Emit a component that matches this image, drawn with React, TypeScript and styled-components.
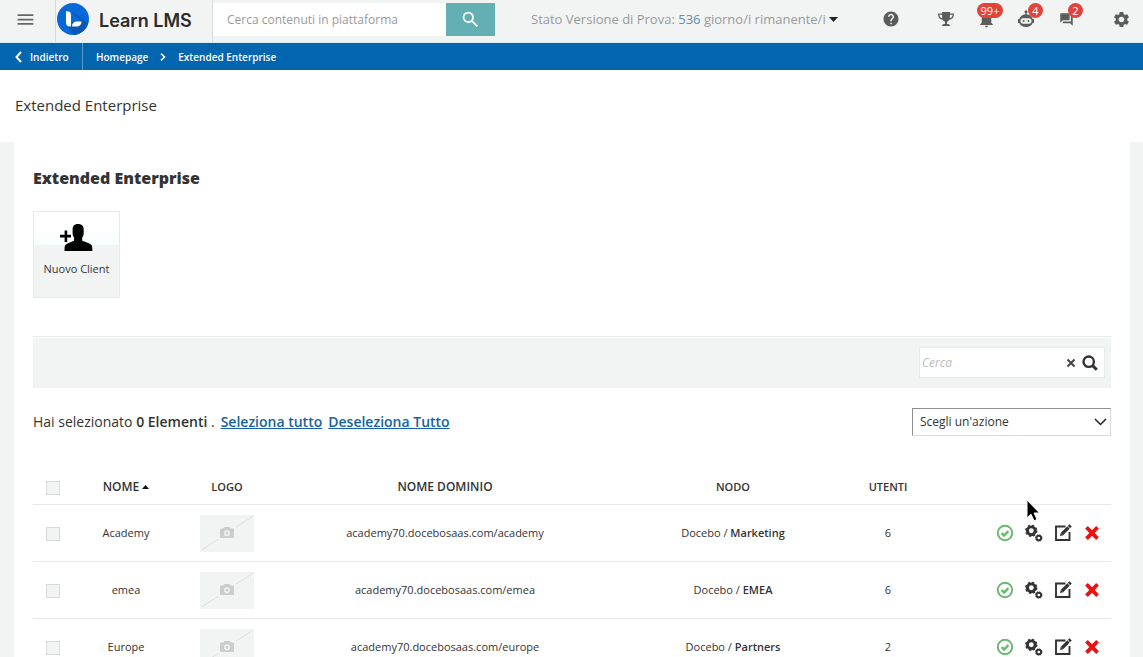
import React from "react";
import styled, { createGlobalStyle } from "styled-components";
import { MdMenu, MdSearch, MdHelp, MdSettings, MdForum, MdNotifications } from "react-icons/md";

const GlobalStyle = createGlobalStyle`
  *, *::before, *::after { box-sizing: border-box; }
  html { scrollbar-width: none; }
  body {
    margin: 0;
    background: #fff;
    color: #333;
    font-family: "Open Sans", "Noto Sans", sans-serif;
    font-size: 12px;
    line-height: 16px;
  }
  button, input, select { font: inherit; color: inherit; margin: 0; }
  button { border: 0; padding: 0; background: none; cursor: pointer; }
  a { color: inherit; text-decoration: none; }
`;

const Page = styled.div`
  position: relative;
`;

const TopBar = styled.header`
  display: flex;
  align-items: stretch;
  height: 43px;
  background: #f2f4f4;
  border-bottom: 1px solid #d5eef4;
`;

const MenuButton = styled.button`
  width: 55px;
  padding: 0 4px 4px 0;
  display: flex;
  align-items: center;
  justify-content: center;
  color: #666;
`;

const Brand = styled.a`
  display: flex;
  align-items: center;
  gap: 10px;
  width: 158px;
  padding: 0 0 4px 1px;
  border-left: 1px solid #d8dada;
  border-right: 1px solid #d8dada;
  color: #2b2b2b;
  font-family: Inter, "Liberation Sans", sans-serif;
  font-size: 18px;
  line-height: 24px;
  font-weight: 600;
  white-space: nowrap;
`;

const BrandName = styled.span`
  padding-top: 4px;
`;

const GlobalSearch = styled.form`
  display: flex;
  width: 282px;
  padding: 3px 0 6px;
`;

const GlobalSearchInput = styled.input`
  flex: 1;
  min-width: 0;
  padding: 0 14px;
  border: 0;
  background: #fff;
  &::placeholder { color: #999; opacity: 1; }
`;

const GlobalSearchButton = styled.button`
  width: 49px;
  display: flex;
  align-items: center;
  justify-content: center;
  border-radius: 0 1px 1px 0;
  background: #62b0b3;
  color: #fff;
`;

const TrialStatus = styled.button`
  display: flex;
  align-items: center;
  gap: 3px;
  margin-left: 36px;
  padding-bottom: 4px;
  color: #999;
  font-size: 13px;
  white-space: nowrap;
  span { color: #5f8db8; }
`;

const Tools = styled.nav`
  display: flex;
  margin-left: auto;
  padding: 0 2px 4px 0;
`;

const ToolButton = styled.button<{ $before?: boolean; $after?: boolean }>`
  position: relative;
  width: 40px;
  margin-left: ${(p) => (p.$before ? 15 : 0)}px;
  margin-right: ${(p) => (p.$after ? 15 : 0)}px;
  display: flex;
  align-items: center;
  justify-content: center;
  color: #5c5c5c;
`;

const Badge = styled.span<{ $wide?: boolean }>`
  position: absolute;
  top: 3px;
  left: ${(p) => (p.$wide ? 11 : 22)}px;
  min-width: ${(p) => (p.$wide ? 26 : 15)}px;
  height: 15px;
  border-radius: 8px;
  background: #e0443a;
  color: #fff;
  font-size: 11px;
  line-height: 15px;
  text-align: center;
`;

const Breadcrumbs = styled.nav`
  display: flex;
  align-items: center;
  height: 27px;
  background: #0265ae;
  color: #fff;
  font-size: 10px;
  font-weight: 600;
`;

const BackLink = styled.a`
  display: flex;
  align-items: center;
  gap: 8px;
  align-self: stretch;
  width: 83px;
  padding-left: 15px;
  border-right: 1px solid #5a9bcc;
`;

const Trail = styled.div`
  display: flex;
  align-items: center;
  gap: 12px;
  padding-left: 13px;
`;

const PageTitle = styled.h1`
  margin: 0;
  padding: 23px 15px 25px;
  font-size: 15px;
  line-height: 24px;
  font-weight: 400;
`;

const Gutter = styled.main`
  padding: 0 13px 0 14px;
  background: #f2f4f4;
`;

const Panel = styled.section`
  padding: 24px 19px 40px;
  background: #fff;
`;

const SectionTitle = styled.h2`
  margin: 0 0 21px;
  font-size: 16px;
  line-height: 24px;
  font-weight: 800;
`;

const ActionTile = styled.button`
  display: flex;
  flex-direction: column;
  align-items: center;
  gap: 8px;
  width: 87px;
  height: 87px;
  padding-top: 12px;
  border: 1px solid #e8eaea;
  background: linear-gradient(#fff 16px, #f6fdfd 33px, #f2f4f4 33px);
  font-size: 11px;
`;

const FilterBar = styled.div`
  display: flex;
  justify-content: flex-end;
  margin-top: 38px;
  padding: 10px 6px;
  background: #f2f4f4;
  border-top: 1px solid #e8eaea;
  box-shadow: inset 0 1px #fff;
`;

const FilterForm = styled.form`
  display: flex;
  align-items: center;
  gap: 6px;
  width: 186px;
  height: 31px;
  padding: 0 6px 0 2px;
  border: 1px solid #e8eaea;
  background: #fff;
`;

const FilterInput = styled.input`
  flex: 1;
  min-width: 0;
  padding: 0;
  border: 0;
  background: none;
  &::placeholder { color: #bbb; opacity: 1; font-style: italic; }
`;

const IconButton = styled.button`
  display: flex;
`;

const SelectionBar = styled.div`
  display: flex;
  justify-content: space-between;
  align-items: center;
  margin-top: 20px;
`;

const SelectionText = styled.p`
  margin: 0;
  display: flex;
  gap: 6px;
  font-size: 14px;
  line-height: 20px;
  b { font-weight: 600; }
`;

const SelectionLink = styled.a`
  color: #1564a0;
  font-weight: 600;
  text-decoration: underline;
`;

const SelectWrap = styled.div`
  display: grid;
  align-items: center;
  width: 199px;
  > * { grid-area: 1 / 1; }
  > svg { justify-self: end; margin-right: 4px; pointer-events: none; }
`;

const ActionSelect = styled.select`
  appearance: none;
  width: 100%;
  height: 28px;
  padding: 0 24px 0 7px;
  border: 1px solid;
  border-color: #8f8f8f #d8d8d8 #d8d8d8 #8f8f8f;
  border-radius: 0;
  background: #fff;
`;

const ClientTable = styled.table`
  width: 100%;
  margin-top: 33px;
  table-layout: fixed;
  border-collapse: separate;
  border-spacing: 0;
  text-align: center;
`;

const HeadCell = styled.th`
  height: 36px;
  padding: 0;
  border-bottom: 1px solid #e8e8e8;
  font-size: 11px;
  font-weight: 600;
  text-transform: uppercase;
`;

const SortButton = styled.button`
  display: inline-flex;
  align-items: center;
  gap: 3px;
  font-size: 12px;
  font-weight: 600;
  text-transform: uppercase;
`;

const Cell = styled.td`
  height: 57px;
  padding: 0;
  border-bottom: 1px solid #e8e8e8;
  font-size: 11px;
  b { font-weight: 600; }
`;

const Tick = styled.input.attrs({ type: "checkbox" })`
  appearance: none;
  display: block;
  width: 14px;
  height: 14px;
  margin: 2px auto 0;
  border: 1px solid #d8dada;
  background: #f2f4f4;
  &:checked { background: #0265ae; }
`;

const Thumb = styled.svg`
  display: block;
  margin: 0 auto;
`;

const RowActions = styled.div`
  display: flex;
  justify-content: flex-end;
  align-items: center;
  gap: 11px;
  padding-right: 10px;
`;

const Pointer = styled.svg`
  position: absolute;
  left: 90%;
  top: 499px;
  margin-left: -3px;
  pointer-events: none;
`;

const LogoMark = () => (
  <svg width="32" height="32" viewBox="0 0 32 32" aria-hidden="true">
    <circle cx="16" cy="16" r="16" fill="#0868d8" />
    <path d="M14 8 L31 20 A16 16 0 0 1 17 32 L11 23 L24 18Z" fill="#0757b5" />
    <path d="M9 8.500c2.600-.6 5 .3 5 3.500v11.500c-3 .6-5-1-5-4z" fill="#fff" />
    <path d="M15 23.500c0-3.500 2.400-5 5-5h4.500c0 3.400-2.300 5-5 5z" fill="#fff" />
  </svg>
);

const Trophy = () => (
  <svg width="16" height="16" viewBox="0 0 16 16" fill="currentColor" aria-hidden="true">
    <path d="M4 1h8v1.500h4c0 3.800-1.500 6-4.700 6.300-.5.900-1.300 1.600-2.300 1.900V13c1.800 0 3 .6 3 2H4c0-1.400 1.200-2 3-2v-2.300c-1-.3-1.800-1-2.300-1.900C1.500 8.500 0 6.300 0 2.500h4zM4 3.800H1.400C1.600 5.800 2.500 7 4.200 7.300zM12 3.800l-.2 3.500c1.700-.3 2.600-1.500 2.800-3.500z" />
  </svg>
);

const Robot = () => (
  <svg width="18" height="18" viewBox="0 0 18 18" fill="currentColor" aria-hidden="true">
    <circle cx="9" cy="1.800" r="1.500" />
    <path d="M8.400 2h1.200v2.300C12.600 4.600 15 6.500 15.600 9H17v4h-1.400c-.8 2.600-3.400 4-6.600 4s-5.800-1.400-6.600-4H1V9h1.400C3 6.500 5.400 4.600 8.400 4.300z" />
    <rect x="3.500" y="8.300" width="11" height="5.400" rx="2.700" fill="#f2f4f4" />
    <circle cx="6.600" cy="11" r="1" />
    <circle cx="11.400" cy="11" r="1" />
  </svg>
);

const NewClientIcon = () => (
  <svg width="34" height="29" viewBox="0 0 34 29" aria-hidden="true">
    <path d="M18 0c4 0 5.700 2.200 5.700 5.500V9c0 2-.6 3.600-1.500 4.500v3.200c3.500 1.300 7.500 2.500 9.300 4.300.8.900.9 3.500.9 6H4.500c0-2.500.1-5.100.9-6 1.800-1.800 5.500-3 8.700-4.300v-3.200c-.9-.9-1.500-2.500-1.500-4.500V5.500C12.600 2.200 14.300 0 18 0z" />
    <path d="M4.600 6.500h2.600v4.300H11v2.800H7.200v4.300H4.600v-4.300H0v-2.800h4.600z" />
  </svg>
);

const Magnifier = () => (
  <svg width="16" height="16" viewBox="0 0 16 16" fill="none" stroke="#333" aria-hidden="true">
    <circle cx="6.700" cy="6.700" r="5.200" strokeWidth="2.400" />
    <path d="M10.600 10.600l4.200 4.200" strokeWidth="3" />
  </svg>
);

const Chevron = ({ back }: { back?: boolean }) => (
  <svg width={back ? 7 : 6} height={back ? 12 : 8} viewBox={back ? "0 0 7 12" : "0 0 6 8"} fill="none" stroke="#fff" strokeWidth={back ? 2 : 1.6} aria-hidden="true">
    <path d={back ? "M6 1L1.500 6L6 11" : "M1 .7L4.500 4L1 7.300"} />
  </svg>
);

const CheckIcon = () => (
  <svg width="18" height="18" viewBox="0 0 18 18" fill="none" stroke="#6cb873" aria-hidden="true">
    <circle cx="9" cy="9" r="7.200" strokeWidth="2" />
    <path d="M5.600 9.200l2.500 2.300 4.300-4.400" strokeWidth="2.500" />
  </svg>
);

const GearsIcon = () => (
  <svg width="18" height="18" viewBox="0 0 18 18" fill="none" stroke="#333" aria-hidden="true">
    <circle cx="6.300" cy="6.800" r="3.900" strokeWidth="2.900" />
    <circle cx="6.300" cy="6.800" r="5.500" strokeWidth="1.400" strokeDasharray="2.300 2.020" />
    <circle cx="13.800" cy="14" r="2.300" strokeWidth="1.900" />
    <circle cx="13.800" cy="14" r="3.300" strokeWidth=".8" strokeDasharray="1.400 1.190" />
  </svg>
);

const EditIcon = () => (
  <svg width="18" height="18" viewBox="0 0 18 18" fill="none" stroke="#333" aria-hidden="true">
    <path d="M11.500 2.500H2v13.500h13.500V8" strokeWidth="1.900" />
    <path d="M8 10L14.500 3.500" strokeWidth="3.200" />
    <path d="M15 3L16.600 1.400" strokeWidth="3.200" />
    <path d="M6.800 8.800L9.300 11.300L6 12.100z" fill="#333" stroke="none" />
  </svg>
);

const DeleteIcon = () => (
  <svg width="18" height="18" viewBox="0 0 18 18" aria-hidden="true">
    <path d="M9 6.300L13.200 2l2.700 2.600L11.700 9l4.200 4.300-2.700 2.700L9 11.700 4.800 16l-2.700-2.700L6.300 9 2.100 4.600 4.800 2z" fill="#ee1111" />
  </svg>
);

const NoLogo = () => (
  <Thumb width="54" height="37" viewBox="0 0 54 37" role="img" aria-label="Nessun logo">
    <rect width="54" height="37" fill="#f2f4f4" />
    <path d="M1.500 35L18 24.500M36 12L53.500 1" stroke="#ddd" />
    <path d="M21 13.500h2.500l1-1.500h5l1 1.500H33a1 1 0 0 1 1 1V22a1 1 0 0 1-1 1H21a1 1 0 0 1-1-1v-7.500a1 1 0 0 1 1-1z" fill="#ccc" />
    <circle cx="27" cy="18.300" r="2.200" fill="none" stroke="#f2f4f4" strokeWidth="1.500" />
  </Thumb>
);

const clients = [
  { name: "Academy", domain: "academy70.docebosaas.com/academy", node: "Marketing", users: 6 },
  { name: "emea", domain: "academy70.docebosaas.com/emea", node: "EMEA", users: 6 },
  { name: "Europe", domain: "academy70.docebosaas.com/europe", node: "Partners", users: 2 },
];

const columnWidths = [40, 106, 96, 340, 236, 74, 186];

export default function App() {
  return (
    <Page>
      <GlobalStyle />
      <TopBar>
        <MenuButton aria-label="Menu"><MdMenu size={21} /></MenuButton>
        <Brand href="#"><LogoMark /><BrandName>Learn LMS</BrandName></Brand>
        <GlobalSearch>
          <GlobalSearchInput type="text" aria-label="Cerca contenuti" placeholder="Cerca contenuti in piattaforma" />
          <GlobalSearchButton type="button" aria-label="Cerca"><MdSearch size={21} /></GlobalSearchButton>
        </GlobalSearch>
        <TrialStatus>
          <div>Stato Versione di Prova: <span>536</span> giorno/i rimanente/i</div>
          <svg width="9" height="5" viewBox="0 0 9 5" aria-hidden="true"><path d="M0 0h9L4.500 5z" fill="#222" /></svg>
        </TrialStatus>
        <Tools aria-label="Strumenti">
          <ToolButton $after aria-label="Aiuto"><MdHelp size={18} /></ToolButton>
          <ToolButton aria-label="Premi"><Trophy /></ToolButton>
          <ToolButton aria-label="Notifiche"><MdNotifications size={19} /><Badge $wide>99+</Badge></ToolButton>
          <ToolButton aria-label="Assistente"><Robot /><Badge>4</Badge></ToolButton>
          <ToolButton aria-label="Messaggi"><MdForum size={15} /><Badge>2</Badge></ToolButton>
          <ToolButton $before aria-label="Impostazioni"><MdSettings size={19} /></ToolButton>
        </Tools>
      </TopBar>
      <Breadcrumbs aria-label="Percorso">
        <BackLink href="#"><Chevron back />Indietro</BackLink>
        <Trail>
          <a href="#">Homepage</a>
          <Chevron />
          <a href="#">Extended Enterprise</a>
        </Trail>
      </Breadcrumbs>
      <PageTitle>Extended Enterprise</PageTitle>
      <Gutter>
        <Panel>
          <SectionTitle>Extended Enterprise</SectionTitle>
          <ActionTile><NewClientIcon />Nuovo Client</ActionTile>
          <FilterBar>
            <FilterForm>
              <FilterInput type="text" aria-label="Cerca" placeholder="Cerca" />
              <IconButton type="reset" aria-label="Cancella">
                <svg width="10" height="10" viewBox="0 0 10 10" aria-hidden="true"><path d="M1.500 1.500l7 7M8.500 1.500l-7 7" stroke="#444" strokeWidth="2" /></svg>
              </IconButton>
              <IconButton type="button" aria-label="Cerca"><Magnifier /></IconButton>
            </FilterForm>
          </FilterBar>
          <SelectionBar>
            <SelectionText>
              <span>Hai selezionato <b>0 Elementi</b> .</span>
              <SelectionLink href="#">Seleziona tutto</SelectionLink>
              <SelectionLink href="#">Deseleziona Tutto</SelectionLink>
            </SelectionText>
            <SelectWrap>
              <ActionSelect aria-label="Azione"><option>Scegli un'azione</option></ActionSelect>
              <svg width="13" height="8" viewBox="0 0 13 8" fill="none" stroke="#222" strokeWidth="1.500" aria-hidden="true"><path d="M1 1l5.500 5.500L12 1" /></svg>
            </SelectWrap>
          </SelectionBar>
          <ClientTable>
            <colgroup>{columnWidths.map((w, i) => <col key={i} width={w} />)}</colgroup>
            <thead>
              <tr>
                <HeadCell><Tick aria-label="Seleziona tutti" /></HeadCell>
                <HeadCell>
                  <SortButton>Nome
                    <svg width="7" height="4" viewBox="0 0 7 4" aria-hidden="true"><path d="M0 4h7L3.500 0z" fill="#111" /></svg>
                  </SortButton>
                </HeadCell>
                <HeadCell>Logo</HeadCell>
                <HeadCell><SortButton>Nome dominio</SortButton></HeadCell>
                <HeadCell>Nodo</HeadCell>
                <HeadCell>Utenti</HeadCell>
                <HeadCell aria-label="Azioni" />
              </tr>
            </thead>
            <tbody>
              {clients.map((c) => (
                <tr key={c.name}>
                  <Cell><Tick aria-label={c.name} /></Cell>
                  <Cell>{c.name}</Cell>
                  <Cell><NoLogo /></Cell>
                  <Cell>{c.domain}</Cell>
                  <Cell>Docebo / <b>{c.node}</b></Cell>
                  <Cell>{c.users}</Cell>
                  <Cell>
                    <RowActions>
                      <IconButton aria-label="Attivo"><CheckIcon /></IconButton>
                      <IconButton aria-label="Configura"><GearsIcon /></IconButton>
                      <IconButton aria-label="Modifica"><EditIcon /></IconButton>
                      <IconButton aria-label="Elimina"><DeleteIcon /></IconButton>
                    </RowActions>
                  </Cell>
                </tr>
              ))}
            </tbody>
          </ClientTable>
        </Panel>
      </Gutter>
      <Pointer width="14" height="23" viewBox="0 0 14 23" aria-hidden="true">
        <path d="M1 1v18l4-3.800 3 6.600 3-1.300-2.900-6.500h5.400z" fill="#000" stroke="#fff" strokeWidth="1" />
      </Pointer>
    </Page>
  );
}
